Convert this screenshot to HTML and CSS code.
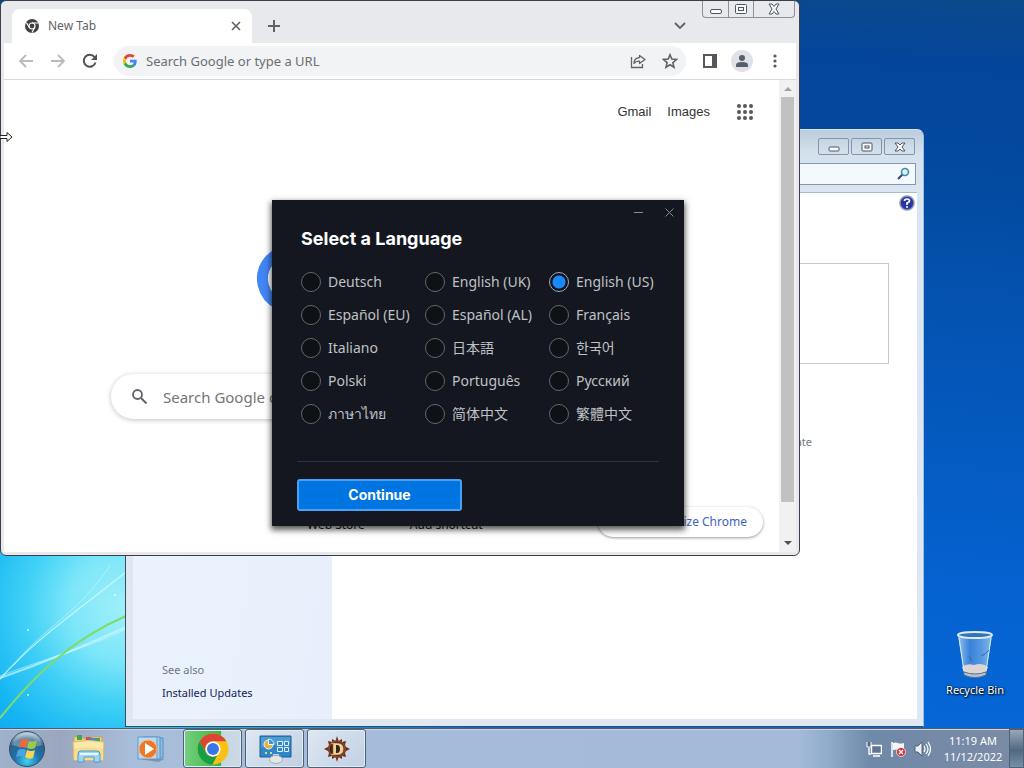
FILE: index.html
```html
<!DOCTYPE html>
<html lang="en">
<head>
<meta charset="utf-8">
<title>Desktop</title>
<link rel="stylesheet" href="styles.css">
</head>
<body>
<div class="desktop">
  <main class="workspace">
    <svg class="wallpaper-swoosh" viewBox="0 0 126 172" aria-hidden="true">
      <g fill="none" stroke-linecap="round">
        <path d="M0 122C40 108 80 92 126 71" stroke="#c9f6ff" stroke-width="2" opacity=".7"/>
        <path d="M0 123C34 84 76 56 126 16" stroke="#d8fbff" stroke-width="1.500" opacity=".7"/>
        <path d="M14 109C40 74 76 60 110 10" stroke="#d8fbff" stroke-width="1" opacity=".5"/>
        <path d="M0 120C40 104 84 94 126 73" stroke="#e6fcff" stroke-width="1" opacity=".5"/>
        <path d="M0 162C32 122 70 84 126 60" stroke="#7fdc6c" stroke-width="2"/>
      </g>
      <g fill="#dffcff"><circle cx="28" cy="74" r="1"/><circle cx="115" cy="39" r="1"/><circle cx="28" cy="139" r="1"/></g>
    </svg>

    <a class="shortcut" href="#">
      <svg width="44" height="50" viewBox="0 0 44 50" aria-hidden="true">
        <defs><linearGradient id="bin" x1="0" x2="1"><stop offset="0" stop-color="#b5d7f0" stop-opacity=".85"/><stop offset=".35" stop-color="#4f8fdc" stop-opacity=".7"/><stop offset=".7" stop-color="#79b1ea" stop-opacity=".7"/><stop offset="1" stop-color="#a4c8e8" stop-opacity=".85"/></linearGradient></defs>
        <path d="M5 5L11 44Q22 49 33 44L39 5Z" fill="url(#bin)"/>
        <path d="M9 37Q14 33 21 35Q29 32 35 37L33 42Q22 46 11 42Z" fill="#dcd5d4"/>
        <path d="M11 42Q22 46 33 42V45Q22 50 11 45Z" fill="#b9c4ce" stroke="#54718f" stroke-width="1"/>
        <path d="M6 8L11 41M38 8L33 41" stroke="#d9edfa" stroke-width="1"/>
        <path d="M16 26l3 5M28 26q5-2 8-6" stroke="#3165ae" fill="none"/>
        <ellipse cx="22" cy="5" rx="17" ry="3" fill="#3474b6" stroke="#dce9f0" stroke-width="2"/>
      </svg>
      <span>Recycle Bin</span>
    </a>

    <section class="window explorer" aria-label="Programs and Features">
      <div class="aero-buttons">
        <button aria-label="Minimize"><svg width="14" height="14"><rect x="2" y="7" width="10" height="4" rx="1"/></svg></button>
        <button aria-label="Maximize"><svg width="14" height="14"><rect x="2" y="3" width="10" height="8" rx="1"/><rect x="5" y="6" width="4" height="2"/></svg></button>
        <button aria-label="Close"><svg width="14" height="14"><path d="M2 3h3l2 2 2-2h3L9 7l3 4H9L7 9l-2 2H2l3-4z"/></svg></button>
      </div>
      <div class="search-row">
        <input type="text" aria-label="Search programs">
        <svg width="14" height="14" aria-hidden="true"><path d="M7 7L2 12" stroke="#2c4a70" stroke-width="2"/><circle cx="9" cy="5" r="3.5" fill="#d6f4fa" stroke="#4388ab" stroke-width="1.6"/></svg>
      </div>
      <div class="explorer-body">
        <nav class="side">
          <span>See also</span>
          <a href="#">Installed Updates</a>
        </nav>
        <div class="pane">
          <button class="help" aria-label="Help"><svg width="16" height="16"><circle cx="8" cy="8" r="7" fill="#2a36a0" stroke="#8796b5" stroke-width="1.5"/><path d="M5.500 6Q5.500 4 8 4t2.500 2Q10.500 7.300 8 8v2" fill="none" stroke="#fff" stroke-width="1.700"/><circle cx="8" cy="12" r="1" fill="#fff"/></svg></button>
          <div class="list"></div>
          <p class="hint">Update</p>
        </div>
      </div>
    </section>

    <section class="window chrome" aria-label="Chrome">
      <header class="tab-strip">
        <div class="tab">
          <svg width="14" height="14" viewBox="0 0 14 14" aria-hidden="true"><circle cx="7" cy="7" r="7" fill="#3f4145"/><circle cx="7" cy="7" r="3" fill="none" stroke="#fff" stroke-width="1.200"/><path d="M7 4h6M4.400 8.500L1.300 3.500M9.600 8.500L7 13.500" stroke="#fff" stroke-width="1.200"/></svg>
          <span>New Tab</span>
          <button aria-label="Close tab"><svg width="10" height="10"><path d="M1 1l8 8M9 1L1 9" stroke="#5f6368" stroke-width="1.600"/></svg></button>
        </div>
        <button class="new-tab" aria-label="New tab"><svg width="12" height="12"><path d="M6 0v12M0 6h12" stroke="#5f6368" stroke-width="2"/></svg></button>
        <button class="tab-search" aria-label="Search tabs"><svg width="12" height="8"><path d="M1 1l5 5 5-5" fill="none" stroke="#5f6368" stroke-width="1.800"/></svg></button>
        <div class="caption">
          <button aria-label="Minimize"><svg width="14" height="14"><rect x="1.500" y="7.500" width="11" height="4" rx="1.500"/></svg></button>
          <button aria-label="Maximize"><svg width="14" height="14"><rect x="1.500" y="2.500" width="11" height="9" rx="1"/><rect x="4.500" y="5.500" width="5" height="3"/></svg></button>
          <button aria-label="Close"><svg width="14" height="14"><path d="M2 2h3l2 2.500L9 2h3L9 7l3 5H9L7 9.500 5 12H2l3-5z"/></svg></button>
        </div>
      </header>
      <div class="toolbar">
        <button aria-label="Back"><svg width="16" height="16"><path d="M15 8H2M8 2L2 8l6 6" fill="none" stroke="#b9bbbe" stroke-width="1.800"/></svg></button>
        <button aria-label="Forward"><svg width="16" height="16"><path d="M1 8h13M8 2l6 6-6 6" fill="none" stroke="#b9bbbe" stroke-width="1.800"/></svg></button>
        <button aria-label="Reload"><svg width="16" height="16"><path d="M13.500 9.500A6 6 0 1 1 12.500 4" fill="none" stroke="#4f5256" stroke-width="2"/><path d="M15 1v6H9z" fill="#4f5256"/></svg></button>
        <div class="omnibox">
          <svg width="14" height="14" viewBox="0 0 48 48" aria-hidden="true"><path fill="#EA4335" d="M24 9.500c3.500 0 6.700 1.200 9.200 3.600l6.900-6.900C35.900 2.400 30.500 0 24 0 14.600 0 6.500 5.400 2.600 13.200l8 6.200C12.400 13.700 17.700 9.500 24 9.500z"/><path fill="#4285F4" d="M47 24.500c0-1.600-.2-3.100-.4-4.500H24v9h12.900c-.6 3-2.300 5.500-4.800 7.200l7.700 6C44.400 38 47 31.800 47 24.500z"/><path fill="#FBBC05" d="M10.500 28.600a14 14 0 0 1 0-9.200l-8-6.200a24 24 0 0 0 0 21.600z"/><path fill="#34A853" d="M24 48c6.500 0 11.900-2.100 15.900-5.800l-7.700-6c-2.200 1.400-4.900 2.300-8.200 2.300-6.300 0-11.600-4.200-13.500-9.900l-8 6.200C6.500 42.600 14.600 48 24 48z"/></svg>
          <input type="text" placeholder="Search Google or type a URL" aria-label="Address">
          <button aria-label="Share"><svg width="16" height="16" fill="none" stroke="#5f6368" stroke-width="1.300"><path d="M1.500 4v10.500h11V11"/><path d="M9.500 2.500L15 6.500l-5.500 4v-2.300C7 8 5 9 4 10.500 4 7 6 4.800 9.500 4.600z" stroke-linejoin="round"/></svg></button>
          <button aria-label="Bookmark"><svg width="16" height="16"><path d="M8 1.800l1.800 4.300 4.700.4-3.600 3.100 1.100 4.600L8 11.700l-4 2.500 1.100-4.600L1.500 6.500l4.700-.4z" fill="none" stroke="#5f6368" stroke-width="1.600"/></svg></button>
        </div>
        <button class="panel-button" aria-label="Side panel"><svg width="14" height="14"><path d="M1 1h12v12H1z" fill="none" stroke="#55575b" stroke-width="2"/><path d="M9 1h4v12H9z" fill="#55575b"/></svg></button>
        <button class="avatar" aria-label="Profile"><svg width="14" height="14"><circle cx="7" cy="4" r="3" fill="#55606b"/><path d="M1 13v-2q0-3 6-3t6 3v2z" fill="#55606b"/></svg></button>
        <button aria-label="Menu"><svg width="4" height="14" fill="#55575b"><circle cx="2" cy="2" r="1.600"/><circle cx="2" cy="7" r="1.600"/><circle cx="2" cy="12" r="1.600"/></svg></button>
      </div>
      <div class="page">
        <div class="new-tab-page">
          <nav class="top-links">
            <a href="#">Gmail</a>
            <a href="#">Images</a>
            <button aria-label="Google apps"><svg width="16" height="16" fill="#55575b"><circle cx="2" cy="2" r="2"/><circle cx="8" cy="2" r="2"/><circle cx="14" cy="2" r="2"/><circle cx="2" cy="8" r="2"/><circle cx="8" cy="8" r="2"/><circle cx="14" cy="8" r="2"/><circle cx="2" cy="14" r="2"/><circle cx="8" cy="14" r="2"/><circle cx="14" cy="14" r="2"/></svg></button>
          </nav>
          <svg class="logo" width="272" height="92" viewBox="0 0 272 92" aria-label="Google"><path d="M57 22A28 28 0 1 0 62 44H35" fill="none" stroke="#4285f4" stroke-width="11"/></svg>
          <label class="search-box">
            <svg width="18" height="18"><circle cx="6.500" cy="6.500" r="4.500" fill="none" stroke="#5f6368" stroke-width="1.800"/><path d="M10 10l5.500 5.500" stroke="#5f6368" stroke-width="2"/></svg>
            <input type="text" placeholder="Search Google or type a URL" aria-label="Search">
          </label>
          <div class="bottom-row">
            <a href="#">Web Store</a>
            <a href="#">Add shortcut</a>
            <button class="customize">Customize Chrome</button>
          </div>
        </div>
        <div class="scrollbar" aria-hidden="true">
          <svg width="8" height="4"><path d="M0 4l4-4 4 4z" fill="#a3a3a3"/></svg>
          <div class="thumb"></div>
          <svg width="8" height="4"><path d="M0 0l4 4 4-4z" fill="#505050"/></svg>
        </div>
      </div>
    </section>

    <form class="window dialog" aria-labelledby="dialog-title">
      <div class="dialog-caption">
        <button type="button" aria-label="Minimize"><svg width="9" height="9"><path d="M0 4.500h9" stroke="#8b8d92"/></svg></button>
        <button type="button" aria-label="Close"><svg width="9" height="9"><path d="M.5.500l8 8M8.500.500l-8 8" stroke="#8b8d92"/></svg></button>
      </div>
      <h1 id="dialog-title">Select a Language</h1>
      <div class="languages">
        <label><input type="radio" name="language">Deutsch</label>
        <label><input type="radio" name="language">English (UK)</label>
        <label><input type="radio" name="language" checked>English (US)</label>
        <label><input type="radio" name="language">Español (EU)</label>
        <label><input type="radio" name="language">Español (AL)</label>
        <label><input type="radio" name="language">Français</label>
        <label><input type="radio" name="language">Italiano</label>
        <label lang="ja"><input type="radio" name="language">日本語</label>
        <label lang="ko"><input type="radio" name="language">한국어</label>
        <label><input type="radio" name="language">Polski</label>
        <label><input type="radio" name="language">Português</label>
        <label><input type="radio" name="language">Русский</label>
        <label lang="th"><input type="radio" name="language">ภาษาไทย</label>
        <label lang="zh-Hans"><input type="radio" name="language">简体中文</label>
        <label lang="zh-Hant"><input type="radio" name="language">繁體中文</label>
      </div>
      <hr>
      <button class="continue" type="button">Continue</button>
    </form>

    <svg class="cursor" width="14" height="12" aria-hidden="true"><path d="M0 4.500h7V1.500l5 4.500-5 4.500v-3H0z" fill="#fff" stroke="#222"/></svg>
  </main>

  <footer class="taskbar">
    <button class="start" aria-label="Start">
      <svg width="38" height="38" viewBox="0 0 38 38">
        <defs><radialGradient id="orb" cx=".5" cy=".85" r=".8"><stop offset="0" stop-color="#3fd0f2"/><stop offset=".45" stop-color="#1e72ac"/><stop offset=".8" stop-color="#315f83"/><stop offset="1" stop-color="#a9c4d6"/></radialGradient></defs>
        <circle cx="19" cy="19" r="17.500" fill="url(#orb)" stroke="#2c4f70"/>
        <path d="M4 15Q8 3 19 3t15 12Q19 20 4 15z" fill="#fff" opacity=".28"/>
        <path d="M13 10q4-2 7 0l-2 8q-4-2-7 0z" fill="#ef6a32"/><path d="M21 11q4 2 8-1l-2 8q-4 2-8 0z" fill="#9ccb49"/><path d="M10 20q4-2 8 0l-2 7q-4-2-8 0z" fill="#4ba3e6"/><path d="M19 20q4 2 8 0l-2 8q-4 2-8-1z" fill="#fbd252"/>
      </svg>
    </button>
    <div class="tasks">
      <button aria-label="File Explorer">
        <svg width="34" height="30" viewBox="0 0 34 30">
          <path d="M2 3h8l2 2h8V3h10v20H2z" fill="#efd489" stroke="#c9a757"/><path d="M5 1h5v5H5zM22 4h6v4h-6z" fill="#46a64b"/><path d="M14 3h5v3h-5z" fill="#c85840"/><path d="M18 4h7v3h-7z" fill="#528ac6"/>
          <path d="M1 8q16-3 31 0l-1 18H2z" fill="#fbe9aa" stroke="#dabd6e"/><path d="M2 15q14-3 29 0v11H2z" fill="#f6dc8b"/>
          <path d="M6 28V20q0-3 3-3h16q3 0 3 3v8h-6v-5H12v5z" fill="#9dd5f3" stroke="#4e9acb"/><path d="M8 20h18" stroke="#e5f8ff" stroke-width="2"/>
        </svg>
      </button>
      <button aria-label="Media Player">
        <svg width="30" height="28" viewBox="0 0 30 28">
          <path d="M4 24l18 3 7-3z" fill="#8294ad"/><path d="M9 3h18v20H9z" fill="#8bbbe2" stroke="#5991c5"/><path d="M7 2h17v22H7z" fill="#a5cdec" stroke="#5991c5"/><path d="M2 2h19v22H2z" fill="#b9dbf2" stroke="#6598c7"/>
          <circle cx="12" cy="14" r="9" fill="#ed7928" stroke="#f7b578"/><path d="M9 8l9 6-9 6z" fill="#fff"/>
        </svg>
      </button>
      <button class="open progress" aria-label="Chrome">
        <svg width="32" height="32" viewBox="0 0 32 32">
          <circle cx="16" cy="16" r="15.500" fill="#fbc116"/><path d="M2.600 8.200A15.500 15.500 0 0 1 29.400 8.200H16A8 8 0 0 0 9 20z" fill="#db4437"/><path d="M2.600 8.200L9.200 20A8 8 0 0 0 20 22.800L15.500 31.500A15.500 15.500 0 0 1 2.600 8.200z" fill="#189d49"/><circle cx="16" cy="16" r="7.500" fill="#fff"/><circle cx="16" cy="16" r="6" fill="#3977e4"/>
        </svg>
      </button>
      <button class="open" aria-label="Control Panel">
        <svg width="34" height="30" viewBox="0 0 34 30">
          <path d="M2 2h31v21H2z" fill="#2f86c8" stroke="#1f5e96"/><path d="M3 3h29v7Q17 9 3 14z" fill="#4b9dd4"/><circle cx="10.500" cy="10.500" r="4.500" fill="#eab040" stroke="#e7f4fa"/><path d="M10.500 10.500V5a5.500 5.500 0 0 1 5.500 5.500z" fill="#3c95d2" stroke="#e7f4fa"/><path d="M19.500 7.500h5v4h-5zM26.500 7.500h4v4h-4zM19.500 13.500h5v4h-5zM26.500 13.500h4v4h-4z" fill="#2f86c8" stroke="#dff0fa"/><path d="M8 18v2M13 18v2" stroke="#d9d780" stroke-width="2"/><path d="M15 20h6v4h-6z" fill="#c3cad0"/><ellipse cx="18" cy="25.500" rx="6.500" ry="4" fill="#e4e6e8" stroke="#a6adb5"/>
        </svg>
      </button>
      <button class="open" aria-label="Diablo">
        <svg width="28" height="28" viewBox="0 0 28 28">
          <path d="M14 1l1.500 5L19 4v3l4-1-1 4 1 2 4 2-4 2-1 2 1 4-4-1v3l-3.500-2-1.500 5-1.500-5L9 24v-3l-4 1 1-4-1-2-4-2 4-2 1-2-1-4 4 1V4l3.500 2z" fill="#6b2c1a"/><circle cx="14" cy="14" r="8" fill="#35251d" stroke="#8b4a2c" stroke-width="1.500"/><path d="M8 8h6q6.500 0 6.500 6T14 20H8v-1h2V9H8z" fill="#f0cf9b" stroke="#b7642c" stroke-width=".6"/><path d="M13 10h1q3 0 3 4t-3 4h-1z" fill="#35251d"/>
        </svg>
      </button>
    </div>
    <div class="tray">
      <svg width="16" height="16" aria-label="Network"><path d="M5.500 4.500h10v8h-10z" fill="#5d7590" stroke="#fff" stroke-width="1.400"/><path d="M7 15h7M3 7v6h2" stroke="#fff" stroke-width="1.400" fill="none"/><path d="M1 1v5h4V1" fill="#566980" stroke="#fff"/></svg>
      <svg width="16" height="16" aria-label="Action Center"><path d="M2 1v15" stroke="#fff" stroke-width="1.500"/><path d="M3 2q3-1 5 0t6 0v7q-3 1-5 0T3 9z" fill="#f5f6f7"/><circle cx="11" cy="11" r="4.500" fill="#cf3038" stroke="#fff" stroke-width=".700"/><path d="M9 9l4 4M13 9l-4 4" stroke="#fff" stroke-width="1.500"/></svg>
      <svg width="17" height="16" aria-label="Volume"><path d="M1 5h3l4-4v14l-4-4H1z" fill="#eceff2" stroke="#52647b"/><path d="M10 5q2 3 0 6M12 3q4 5 0 10M14 1q5 7 0 14" fill="none" stroke="#fff" stroke-width="1.200"/></svg>
      <time class="clock"><span>11:19 AM</span><span>11/12/2022</span></time>
    </div>
    <button class="show-desktop" aria-label="Show desktop"></button>
  </footer>
</div>
</body>
</html>
```
FILE: styles.css
```css
* { box-sizing: border-box; }
body {
  margin: 0;
  font-family: "Noto Sans", "Open Sans", sans-serif;
  font-size: 12px;
  line-height: 16px;
}
button {
  display: flex;
  align-items: center;
  justify-content: center;
  margin: 0;
  padding: 0;
  border: 0;
  background: none;
  font: inherit;
}
input { margin: 0; font: inherit; }
a { color: inherit; text-decoration: none; }
svg { display: block; flex: none; }

.desktop {
  display: flex;
  flex-direction: column;
  height: 100vh;
  overflow: hidden;
  background:
    radial-gradient(circle at 12% 79%, #a0effa 0, #7ce6f9 5%, #3fd0f6 9%, #14b4f3 14%, rgba(8, 130, 226, 0) 34%),
    linear-gradient(184deg, #0c4a8c 0, #03459a 8%, #034aa0 22%, #0455b5 42%, #0562d0 70%, #0669da 100%);
}
.workspace { position: relative; flex: 1; min-height: 0; }
.window { position: absolute; display: flex; flex-direction: column; }
.wallpaper-swoosh { position: absolute; left: 0; bottom: 0; width: 126px; overflow: visible; }

/* Desktop shortcut */
.shortcut {
  position: absolute;
  right: 10px;
  bottom: 30px;
  width: 78px;
  display: flex;
  flex-direction: column;
  align-items: center;
  gap: 2px;
  color: #fff;
  white-space: nowrap;
  text-shadow: 1px 1px 2px #000, 0 0 2px #000;
  font-size: 11px;
}

/* Explorer window */
.explorer {
  left: 125px;
  top: 129px;
  width: 799px;
  height: 598px;
  padding: 8px 6px 7px 7px;
  border: 1px solid #3d4a59;
  border-right-color: #9cc0e0;
  border-top-color: #d7e4ef;
  border-radius: 7px 7px 0 0;
  background: linear-gradient(#bccddd 0, #d5e1ed 24px, #dbe5f0 60px, #dfe8f2 100%);
}
.aero-buttons { display: flex; justify-content: flex-end; gap: 2px; padding-right: 2px; }
.aero-buttons button { width: 31px; height: 17px; border: 1px solid #8594a8; border-radius: 2px; }
.aero-buttons svg, .caption svg { fill: #f7f9fb; stroke: #4c5666; }
.search-row {
  display: flex;
  align-items: center;
  height: 22px;
  margin: 8px 1px 7px 0;
  padding-right: 5px;
  border: 1px solid #8296ad;
  background: #f4f9fd;
}
.search-row input { flex: 1; border: 0; background: none; }
.explorer-body { flex: 1; display: flex; background: #fff; border-top: 1px solid #a9bacb; }
.side {
  width: 199px;
  padding: 0 29px 18px;
  display: flex;
  flex-direction: column;
  justify-content: flex-end;
  gap: 7px;
  background: linear-gradient(100deg, #ecf3fd, #e6effb);
  color: #6d7883;
  font-size: 11px;
}
.side a { color: #15215c; }
.pane { flex: 1; display: flex; flex-direction: column; align-items: flex-end; }
.help { margin: 2px 2px 0; }
.list { width: 520px; height: 101px; margin: 52px 28px 0; border: 1px solid #c8c8c8; }
.hint { margin: 70px 105px 0; color: #767c85; font-size: 11px; }

/* Browser window */
.chrome {
  left: 0;
  top: 0;
  width: 800px;
  height: 556px;
  padding: 0 3px 3px;
  border: 1px solid #3c3f47;
  border-radius: 6px;
  background: #e8e9ec;
  overflow: hidden;
}
.tab-strip { display: flex; align-items: center; height: 42px; padding: 0 1px 0 8px; }
.tab {
  align-self: flex-end;
  display: flex;
  align-items: center;
  gap: 9px;
  width: 240px;
  height: 34px;
  padding: 0 11px 0 13px;
  border-radius: 8px 8px 0 0;
  background: #fff;
  color: #5f6368;
}
.tab span { flex: 1; }
.new-tab { width: 28px; height: 28px; margin: 8px 0 0 8px; }
.tab-search { width: 28px; height: 28px; margin: 8px 8px 0 auto; }
.caption {
  align-self: flex-start;
  display: flex;
  border: 1px solid #8d9099;
  border-top: 0;
  border-radius: 0 0 4px 4px;
}
.caption button { width: 25px; height: 16px; }
.caption button + button { border-left: 1px solid #8d9099; }
.caption button:last-child { width: 41px; }
.toolbar {
  display: flex;
  align-items: center;
  gap: 16px;
  height: 37px;
  padding: 0 19px 0 14px;
  border-bottom: 1px solid #d5dadd;
  background: #fff;
}
.omnibox {
  flex: 1;
  display: flex;
  align-items: center;
  gap: 16px;
  height: 30px;
  margin-right: 1px;
  padding: 0 8px 0 9px;
  border-radius: 15px;
  background: #f1f3f4;
}
.omnibox > svg { margin-right: -7px; }
.omnibox input, .search-box input {
  flex: 1;
  min-width: 0;
  padding: 0;
  border: 0;
  background: none;
  font-size: 13px;
  line-height: 22px;
}
.omnibox input::placeholder { color: #6a6e73; opacity: 1; }
.panel-button { margin-right: -2px; }
.avatar { width: 22px; height: 22px; margin-right: 4px; border-radius: 50%; background: #dfe2e6; }
.page { flex: 1; display: flex; min-height: 0; background: #fff; }
.new-tab-page { flex: 1; display: flex; flex-direction: column; align-items: center; min-width: 0; }
.top-links {
  align-self: stretch;
  display: flex;
  justify-content: flex-end;
  align-items: center;
  gap: 16px;
  padding: 24px 26px 0 0;
  color: #333;
  font: 13px/16px "Liberation Sans", sans-serif;
}
.top-links button { margin-left: 11px; }
.logo { margin-top: 120px; }
.search-box {
  display: flex;
  align-items: center;
  gap: 14px;
  width: 561px;
  max-width: 90%;
  height: 45px;
  margin-top: 42px;
  padding: 0 20px;
  border-radius: 23px;
  box-shadow: 0 1px 5px rgba(32, 33, 36, .28);
}
.search-box input { font-size: 15px; }
.search-box input::placeholder { color: #757575; opacity: 1; }
.bottom-row {
  align-self: stretch;
  display: flex;
  align-items: center;
  gap: 45px;
  margin-top: 88px;
  padding: 0 16px 0 303px;
  color: #202124;
}
.bottom-row a { padding-top: 6px; }
.customize {
  width: 165px;
  height: 30px;
  margin-left: auto;
  padding-right: 16px;
  justify-content: flex-end;
  border-radius: 15px;
  background: #fff;
  box-shadow: 0 1px 3px rgba(0, 0, 0, .4);
  color: #3f62bd;
}
.scrollbar {
  display: flex;
  flex-direction: column;
  align-items: center;
  width: 17px;
  padding: 7px 0;
  background: #f1f1f1;
}
.thumb { width: 13px; height: 405px; margin: 6px 0 auto; background: #c1c1c1; }

/* Language dialog */
.dialog {
  left: 272px;
  top: 200px;
  width: 412px;
  height: 326px;
  padding: 0 25px;
  background: #14171f;
  box-shadow: 0 3px 6px 1px rgba(0, 0, 0, .65);
  color: #bfc1c5;
  font-size: 14px;
}
.dialog-caption { display: flex; justify-content: flex-end; gap: 22px; margin: 8px -15px 0 0; }
.dialog h1 {
  margin: 10px 4px 0;
  color: #fff;
  font: 700 18px/24px Inter, sans-serif;
}
.languages {
  display: grid;
  grid-template-columns: repeat(3, 124px);
  grid-auto-rows: 33px;
  margin: 14px 0 0 4px;
}
.languages label { display: flex; align-items: center; gap: 7px; line-height: 20px; white-space: nowrap; }
.languages [lang] { font-family: "Noto Sans", "Noto Sans CJK JP", sans-serif; }
.languages [lang="ko"] { font-family: "Noto Sans", "Noto Sans CJK KR", sans-serif; }
.languages [lang="zh-Hans"] { font-family: "Noto Sans", "Noto Sans CJK SC", sans-serif; }
.languages [lang="zh-Hant"] { font-family: "Noto Sans", "Noto Sans CJK TC", sans-serif; }
.languages input {
  appearance: none;
  width: 20px;
  height: 20px;
  border: 1px solid #63666b;
  border-radius: 50%;
  background: #0e1116;
}
.languages input:checked {
  border-color: #a8a9ad;
  background: radial-gradient(circle, #1b88f8 0 6px, #0b1524 7px);
}
.dialog hr { width: 100%; height: 1px; margin: 31px 0 17px; border: 0; background: #30333b; }
.continue {
  width: 165px;
  height: 32px;
  border: 2px solid #4b9ff5;
  border-radius: 3px;
  background: #0074e0;
  color: #fff;
  font: 700 14px/20px Inter, sans-serif;
}
.cursor { position: absolute; left: 0; top: 131px; }

/* Taskbar */
.taskbar {
  display: flex;
  align-items: stretch;
  height: 40px;
  border-top: 1px solid #4c5e73;
  background: linear-gradient(90deg, #9fb2ca 0, #9aa6be 60px, #a8bdd9 130px, #a4bcda 370px, #a3bbd9 78%, #8fabc9 81%, #6f89a8 85%, #7b8ba5 100%);
  box-shadow: inset 0 1px #c7d6e6;
}
.start { width: 54px; }
.tasks { display: flex; gap: 3px; padding-left: 5px; }
.tasks button { width: 59px; border-radius: 3px; }
.tasks .open {
  border: 1px solid #4e6077;
  background: linear-gradient(135deg, #dfe8f2, #c0d0e3);
  box-shadow: inset 0 0 0 1px #e3ebf4;
}
.tasks .progress { background: linear-gradient(90deg, #78ce82 0, #37ba3c 64%, #c5d8dd 66%, #ccd9e8 100%); }
.tray { display: flex; align-items: center; gap: 8px; margin-left: auto; color: #fff; }
.clock { display: flex; flex-direction: column; width: 70px; margin-left: -1px; text-align: center; font-size: 11px; }
.show-desktop {
  width: 15px;
  margin-left: 1px;
  border: 1px solid #4f6278;
  background: linear-gradient(#98a8b8, #506881 55%, #7790a8);
}
```
